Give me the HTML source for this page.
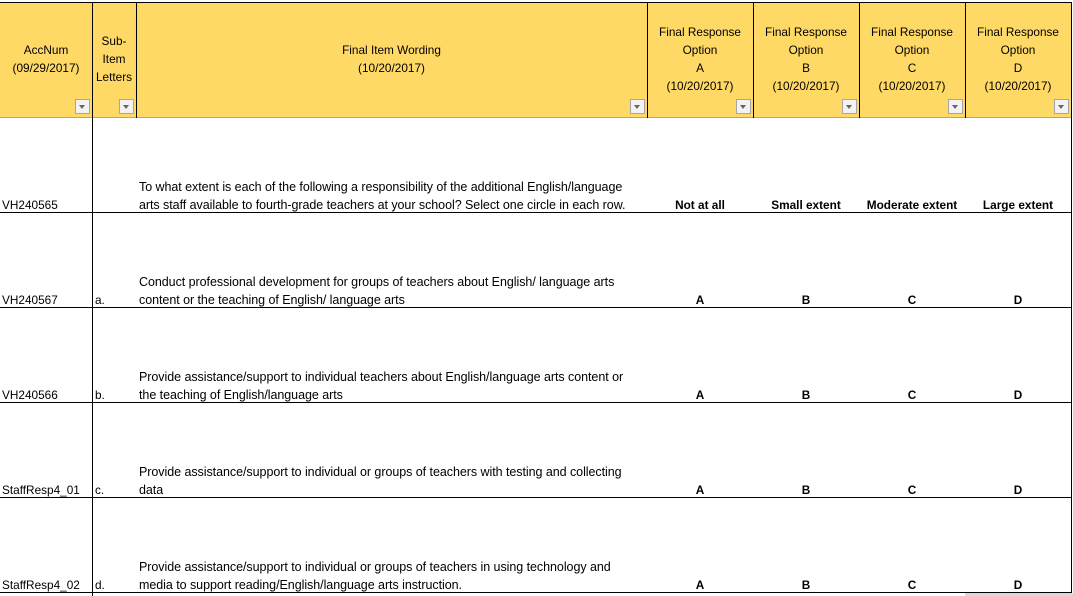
<!DOCTYPE html>
<html><head><meta charset="utf-8"><style>
*{margin:0;padding:0;box-sizing:border-box}
body{width:1073px;height:596px;background:#fff;position:relative;overflow:hidden;font-family:"Liberation Sans",sans-serif;font-size:11.8px;color:#000}
.hdr{position:absolute;top:2px;left:0;width:1072px;height:116px;background:#FFD966;border-top:1px solid #000;border-bottom:1px solid #a6a6a6}
.v{position:absolute;width:1px;background:#000}
.h{position:absolute;height:1px;background:#000;left:0;width:1072px}
.t{position:absolute;white-space:nowrap;line-height:18px}
.w{font-size:12.5px;letter-spacing:-0.05px}
.c{text-align:center}
.dd{position:absolute;top:99px;width:15px;height:15px;background:#f2f2f2;border:1px solid #a6a6a6}
.dd:after{content:"";position:absolute;left:3px;top:5px;border-left:3.5px solid transparent;border-right:3.5px solid transparent;border-top:4px solid #666}
.b{font-weight:bold}
</style></head><body>
<div class="hdr"></div>
<div class="v" style="left:92px;top:2px;height:594px"></div>
<div class="v" style="left:136px;top:2px;height:116px"></div>
<div class="v" style="left:647px;top:2px;height:116px"></div>
<div class="v" style="left:753px;top:2px;height:116px"></div>
<div class="v" style="left:859px;top:2px;height:116px"></div>
<div class="v" style="left:965px;top:2px;height:116px"></div>
<div class="v" style="left:1071px;top:2px;height:594px"></div>
<div class="h" style="top:212px"></div>
<div class="h" style="top:307px"></div>
<div class="h" style="top:402px"></div>
<div class="h" style="top:497px"></div>
<div class="h" style="top:592px"></div>

<div class="t c" style="left:0;width:92px;top:41px">AccNum<br>(09/29/2017)</div>
<div class="t c" style="left:92px;width:44px;top:32px">Sub-<br>Item<br>Letters</div>
<div class="t c" style="left:136px;width:511px;top:41px">Final Item Wording<br>(10/20/2017)</div>
<div class="t c" style="left:647px;width:106px;top:23px">Final Response<br>Option<br>A<br>(10/20/2017)</div>
<div class="t c" style="left:753px;width:106px;top:23px">Final Response<br>Option<br>B<br>(10/20/2017)</div>
<div class="t c" style="left:859px;width:106px;top:23px">Final Response<br>Option<br>C<br>(10/20/2017)</div>
<div class="t c" style="left:965px;width:106px;top:23px">Final Response<br>Option<br>D<br>(10/20/2017)</div>
<div class="dd" style="left:75px"></div>
<div class="dd" style="left:119px"></div>
<div class="dd" style="left:630px"></div>
<div class="dd" style="left:736px"></div>
<div class="dd" style="left:842px"></div>
<div class="dd" style="left:948px"></div>
<div class="dd" style="left:1054px"></div>

<div class="t" style="left:2px;top:196px">VH240565</div>
<div class="t w" style="left:139px;top:178px">To what extent is each of the following a responsibility of the additional English/language<br>arts staff available to fourth-grade teachers at your school? Select one circle in each row.</div>
<div class="t c b" style="left:647px;width:106px;top:196px">Not at all</div>
<div class="t c b" style="left:753px;width:106px;top:196px">Small extent</div>
<div class="t c b" style="left:859px;width:106px;top:196px">Moderate extent</div>
<div class="t c b" style="left:965px;width:106px;top:196px">Large extent</div>

<div class="t" style="left:2px;top:291px">VH240567</div><div class="t" style="left:95px;top:291px">a.</div>
<div class="t w" style="left:139px;top:273px">Conduct professional development for groups of teachers about English/ language arts<br>content or the teaching of English/ language arts</div>

<div class="t" style="left:2px;top:386px">VH240566</div><div class="t" style="left:95px;top:386px">b.</div>
<div class="t w" style="left:139px;top:368px">Provide assistance/support to individual teachers about English/language arts content or<br>the teaching of English/language arts</div>

<div class="t" style="left:2px;top:481px">StaffResp4_01</div><div class="t" style="left:95px;top:481px">c.</div>
<div class="t w" style="left:139px;top:463px">Provide assistance/support to individual or groups of teachers with testing and collecting<br>data</div>

<div class="t" style="left:2px;top:576px">StaffResp4_02</div><div class="t" style="left:95px;top:576px">d.</div>
<div class="t w" style="left:139px;top:558px">Provide assistance/support to individual or groups of teachers in using technology and<br>media to support reading/English/language arts instruction.</div>

<div class="t c b" style="left:647px;width:106px;top:291px">A</div><div class="t c b" style="left:753px;width:106px;top:291px">B</div><div class="t c b" style="left:859px;width:106px;top:291px">C</div><div class="t c b" style="left:965px;width:106px;top:291px">D</div>
<div class="t c b" style="left:647px;width:106px;top:386px">A</div><div class="t c b" style="left:753px;width:106px;top:386px">B</div><div class="t c b" style="left:859px;width:106px;top:386px">C</div><div class="t c b" style="left:965px;width:106px;top:386px">D</div>
<div class="t c b" style="left:647px;width:106px;top:481px">A</div><div class="t c b" style="left:753px;width:106px;top:481px">B</div><div class="t c b" style="left:859px;width:106px;top:481px">C</div><div class="t c b" style="left:965px;width:106px;top:481px">D</div>
<div class="t c b" style="left:647px;width:106px;top:576px">A</div><div class="t c b" style="left:753px;width:106px;top:576px">B</div><div class="t c b" style="left:859px;width:106px;top:576px">C</div><div class="t c b" style="left:965px;width:106px;top:576px">D</div>
<div style="position:absolute;left:965px;top:593px;width:108px;height:3px;background:#d9d9d9"></div>
</body></html>
